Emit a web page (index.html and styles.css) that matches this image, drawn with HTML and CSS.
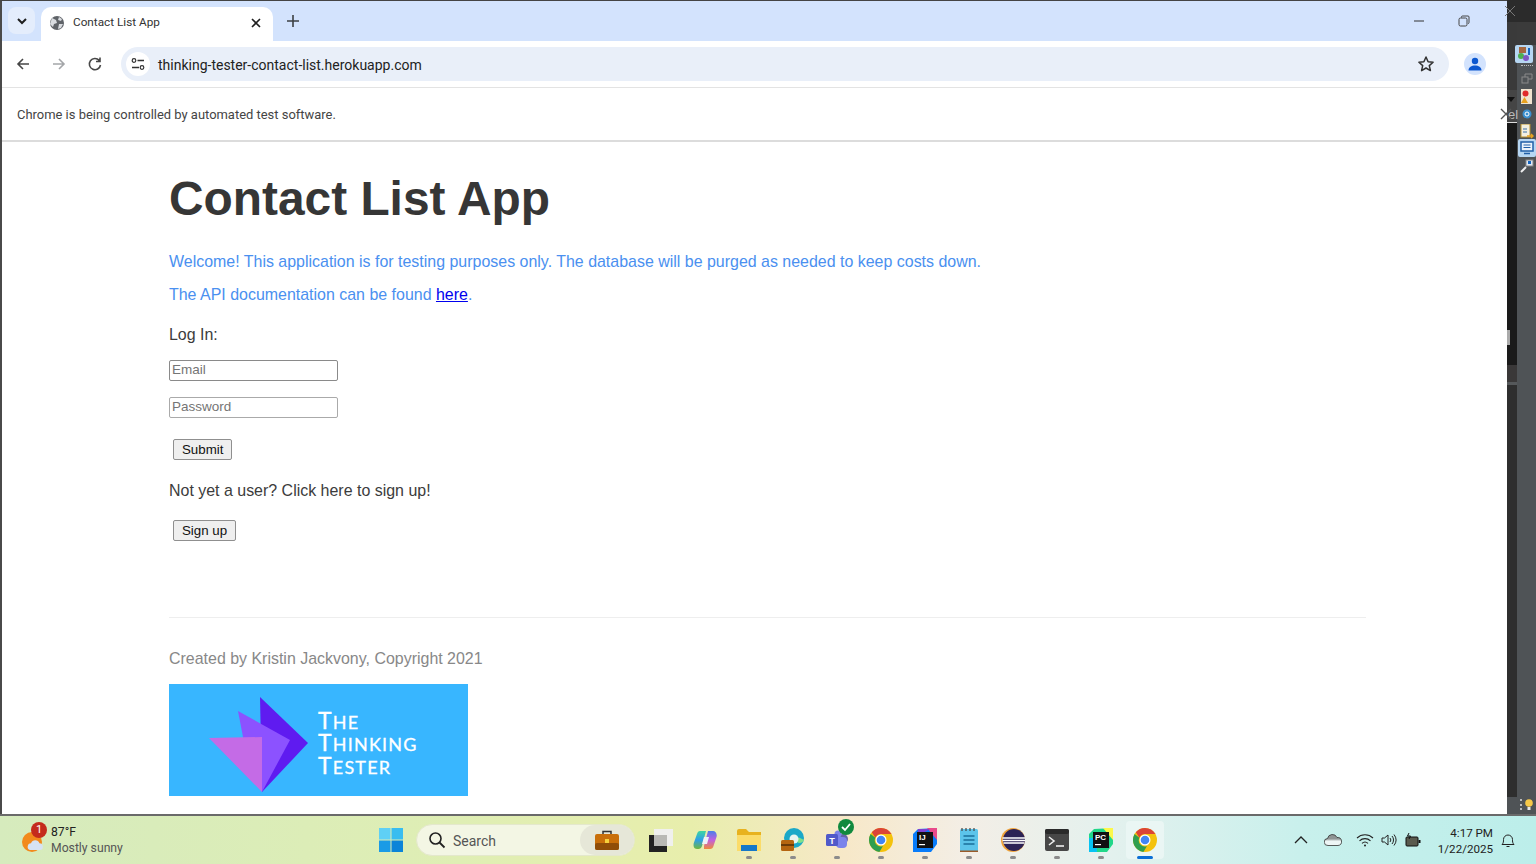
FILE: index.html
```html
<!DOCTYPE html>
<html lang="en">
  <head>
    <title>Contact List App</title>
    <link rel="stylesheet" href="styles.css">
  </head>
  <body>
    <div class="desktop">
      <div class="browser">
        <div class="tabstrip">
          <div class="tabsearch">
            <svg width="12" height="12" viewBox="0 0 12 12"><path d="M2 4l4 4 4-4" fill="none" stroke="#1f1f1f" stroke-width="2"/></svg>
          </div>
          <div class="tab">
            <svg class="favicon" width="16" height="16" viewBox="0 0 16 16"><circle cx="8" cy="8" r="7" fill="#5f6368"/><path d="M3 3l4 2 1 3-3 1-1 3-3-3zM10 2l3 2-1 2-3-1zM10 9l4 0-2 4-3 1z" fill="#d9dce0"/></svg>
            <span class="tabtitle">Contact List App</span>
            <svg width="12" height="12" viewBox="0 0 12 12"><path d="M2 2l8 8M10 2l-8 8" stroke="#1f1f1f" stroke-width="1.6"/></svg>
          </div>
          <svg class="newtab" width="14" height="14" viewBox="0 0 14 14"><path d="M7 1v12M1 7h12" stroke="#3c4043" stroke-width="1.6"/></svg>
          <div class="wincontrols">
            <svg width="12" height="12" viewBox="0 0 12 12"><path d="M1 6h10" stroke="#333" stroke-width="1"/></svg>
            <svg width="12" height="12" viewBox="0 0 12 12"><rect x="1" y="3" width="8" height="8" rx="1.5" fill="none" stroke="#444"/><path d="M3.500 2.500V2a1 1 0 0 1 1-1h5.500a1 1 0 0 1 1 1v5.500a1 1 0 0 1-1 1" fill="none" stroke="#444"/></svg>
          </div>
        </div>
        <div class="toolbar">
          <svg class="navicon" width="16" height="16" viewBox="0 0 16 16"><path d="M14 8H3M8 3L3 8l5 5" fill="none" stroke="#474747" stroke-width="1.600"/></svg>
          <svg class="navicon" width="16" height="16" viewBox="0 0 16 16"><path d="M2 8h11M8 3l5 5-5 5" fill="none" stroke="#a4a6a9" stroke-width="1.600"/></svg>
          <svg class="navicon" width="16" height="16" viewBox="0 0 16 16"><path d="M13.500 9a5.600 5.600 0 1 1-1.300-4.600M13 1.500V5.500H9" fill="none" stroke="#474747" stroke-width="1.600"/></svg>
          <div class="omnibox">
            <div class="siteinfo">
              <svg width="14" height="14" viewBox="0 0 14 14"><circle cx="3" cy="3.500" r="1.800" fill="none" stroke="#333" stroke-width="1.200"/><path d="M6.500 3.500H13M1 10.500h7" stroke="#333" stroke-width="1.400"/><circle cx="11" cy="10.500" r="1.800" fill="none" stroke="#333" stroke-width="1.200"/></svg>
            </div>
            <span class="url">thinking-tester-contact-list.herokuapp.com</span>
            <svg class="star" width="18" height="18" viewBox="0 0 18 18"><path d="M9 2l2.100 4.700 5 .5-3.800 3.400 1.100 5L9 13l-4.400 2.600 1.100-5L1.900 7.200l5-.5z" fill="none" stroke="#333" stroke-width="1.500" stroke-linejoin="round"/></svg>
          </div>
          <div class="profile">
            <svg width="14" height="14" viewBox="0 0 14 14"><circle cx="7" cy="4" r="3.200" fill="#0b57d0"/><path d="M0.500 13.500c0-3.500 3-5 6.500-5s6.500 1.500 6.500 5z" fill="#0b57d0"/></svg>
          </div>
        </div>
        <div class="infobar">Chrome is being controlled by automated test software.</div>
        <main class="page">
          <h1>Contact List App</h1>
          <p class="notice">Welcome! This application is for testing purposes only. The database will be purged as needed to keep costs down.</p>
          <p class="notice">The API documentation can be found <a href="#">here</a>.</p>
          <p class="label">Log In:</p>
          <form>
            <input class="field" type="text" placeholder="Email">
            <input class="field" type="password" placeholder="Password">
            <button class="btn" type="button">Submit</button>
          </form>
          <p class="label signup">Not yet a user? Click here to sign up!</p>
          <button class="btn" type="button">Sign up</button>
          <footer class="footer">
            <p>Created by Kristin Jackvony, Copyright 2021</p>
            <svg class="banner" width="299" height="112" viewBox="0 0 299 112">
              <rect width="299" height="112" fill="#38b6ff"/>
              <polygon points="91,13 139,59 93,108" fill="#5f1bf0"/>
              <polygon points="69,27 121,56 93,108 74,53" fill="#8c52ff"/>
              <polygon points="40,54 93,53 93,108" fill="#c46be6"/>
              <text class="bannertext">
                <tspan x="149" y="45"><tspan class="bigcap">T</tspan>HE</tspan>
                <tspan x="149" y="67"><tspan class="bigcap">T</tspan>HINKING</tspan>
                <tspan x="149" y="90"><tspan class="bigcap">T</tspan>ESTER</tspan>
              </text>
            </svg>
          </footer>
        </main>
      </div>
      <div class="idestrip">
        <div class="idegutter">
          <span class="gutterarrow"></span>
          <span class="gutterel">el</span>
          <span class="gutterthumb"></span>
        </div>
        <div class="idetools">
          <div class="tool active first">
            <svg width="16" height="16" viewBox="0 0 16 16"><rect x="3" y="1" width="7" height="6" fill="#a5673f"/><circle cx="5" cy="10" r="3" fill="#4caf50"/><circle cx="10" cy="12" r="3" fill="#7e57c2"/><path d="M13 2v7" stroke="#1565c0" stroke-width="2"/></svg>
          </div>
          <div class="tooldots"></div>
          <div class="tool">
            <svg width="12" height="12" viewBox="0 0 12 12"><rect x="1" y="5" width="6" height="6" fill="none" stroke="#8a8a8a"/><path d="M4 5V2h7v5H7" fill="none" stroke="#8a8a8a"/></svg>
          </div>
          <div class="tool">
            <svg width="13" height="15" viewBox="0 0 13 15"><rect x="1" y="0" width="11" height="15" fill="#f0e4d0"/><circle cx="5.500" cy="4.500" r="3" fill="#e02b2b"/><path d="M1 14l3.500-6 3.500 6z" fill="#e9a21f"/></svg>
          </div>
          <div class="tool">
            <svg width="10" height="10" viewBox="0 0 10 10"><circle cx="5" cy="5" r="4.500" fill="#3a8fd0"/><circle cx="5" cy="5" r="2" fill="none" stroke="#fff"/></svg>
          </div>
          <div class="tool doc">
            <svg width="14" height="15" viewBox="0 0 14 15"><rect x="1" y="0" width="9" height="13" fill="#f4f0e0" stroke="#b8912e"/><path d="M3 5h4M3 8h4" stroke="#3a6ea5"/><path d="M7 12h6M11 10l2 2-2 2" fill="none" stroke="#e9a21f" stroke-width="1.500"/></svg>
          </div>
          <div class="tool active monitor">
            <svg width="14" height="14" viewBox="0 0 14 14"><rect x="1" y="1" width="12" height="9" fill="#eaf3fb" stroke="#1f5fa8" stroke-width="1.500"/><path d="M3.500 4h7M3.500 6.500h7" stroke="#1f5fa8"/><path d="M4 12.500h6" stroke="#1f5fa8" stroke-width="1.500"/></svg>
          </div>
          <div class="tool">
            <svg width="14" height="14" viewBox="0 0 14 14"><rect x="6" y="1" width="7" height="6" fill="#dfe8f2" stroke="#888"/><rect x="8" y="2" width="3" height="3" fill="#1565c0"/><path d="M1 13l5-5" stroke="#eee" stroke-width="2"/></svg>
          </div>
          <div class="toolspacer"></div>
          <div class="toolbulb">
            <span class="griplines"></span>
            <svg width="8" height="11" viewBox="0 0 8 11"><circle cx="4" cy="4" r="3.800" fill="#f7c948"/><rect x="2.500" y="8" width="3" height="3" fill="#e8e8e8"/></svg>
          </div>
        </div>
      </div>
      <svg class="closex" width="12" height="12" viewBox="0 0 12 12"><path d="M1 1l10 10M11 1L1 11" stroke="#777" stroke-width="1"/></svg>
      <svg class="infoclose" width="12" height="12" viewBox="0 0 12 12"><path d="M1 1l10 10M11 1L1 11" stroke="#555" stroke-width="1.400"/></svg>
    </div>
    <footer class="taskbar">
      <div class="weather">
        <svg class="weathericon" width="26" height="26" viewBox="0 0 26 26">
          <circle cx="11" cy="15" r="10" fill="#f28a1c"/>
          <path d="M9 23a3.500 3.500 0 0 1 1-6.800 4.500 4.500 0 0 1 8.500 0 3.500 3.500 0 0 1 1 6.800z" fill="#d6e3f3"/>
        </svg>
        <span class="weatherbadge">1</span>
        <div class="weathertext">
          <div class="temp">87°F</div>
          <div class="cond">Mostly sunny</div>
        </div>
      </div>
      <svg class="start" width="24" height="24" viewBox="0 0 24 24">
        <rect width="11.500" height="11.500" fill="#5fd0f5"/><rect x="12.500" width="11.500" height="11.500" fill="#38bdf0"/>
        <rect y="12.500" width="11.500" height="11.500" fill="#1a9be6"/><rect x="12.500" y="12.500" width="11.500" height="11.500" fill="#0b84d8"/>
      </svg>
      <div class="search">
        <svg width="18" height="18" viewBox="0 0 18 18"><circle cx="7.500" cy="7.500" r="5.500" fill="none" stroke="#222" stroke-width="1.600"/><path d="M11.500 11.500l5 5" stroke="#222" stroke-width="1.800"/></svg>
        <span class="searchword">Search</span>
        <div class="searchpic">
          <svg width="24" height="20" viewBox="0 0 24 20"><path d="M8 4V1.500h8V4" fill="none" stroke="#333" stroke-width="1.500"/><rect y="4" width="24" height="16" rx="2" fill="#c96f0a"/><rect y="13" width="24" height="7" rx="2" fill="#8f4d08"/><rect x="10" y="9" width="4" height="4" fill="#f6d13c"/></svg>
        </div>
      </div>
      <div class="apps">
        <div class="app">
          <svg width="24" height="24" viewBox="0 0 24 24"><rect x="5" y="1" width="19" height="17" fill="#f0f0ee"/><rect x="0" y="7" width="18" height="17" fill="#222"/><rect x="5" y="7" width="13" height="11" fill="#b9b9b5"/></svg>
        </div>
        <div class="app">
          <svg width="24" height="18" viewBox="0 0 24 18">
            <defs>
              <linearGradient id="copleft" x1="0" y1="0" x2="0" y2="1"><stop offset="0" stop-color="#3dd6a0"/><stop offset=".5" stop-color="#2f9ee8"/><stop offset="1" stop-color="#6fb83c"/></linearGradient>
              <linearGradient id="copright" x1="0" y1="0" x2="0" y2="1"><stop offset="0" stop-color="#4a7fe8"/><stop offset=".5" stop-color="#c060e0"/><stop offset="1" stop-color="#f08a3c"/></linearGradient>
            </defs>
            <path d="M7 0h6l-4 15c-.5 2-2 3-3.500 3H4C1 18 0 15 .8 12L4 3C4.600 1 5.500 0 7 0z" fill="url(#copleft)"/>
            <path d="M11 18h6c2 0 3-1 3.500-3L23.500 6c1-3-1-6-3.500-6H15L11 15z" fill="url(#copright)"/>
            <path d="M11 6h5l-2 7H9z" fill="#eef2f8"/>
          </svg>
        </div>
        <div class="app running">
          <svg width="26" height="24" viewBox="0 0 26 24"><path d="M1 3a2 2 0 0 1 2-2h7l3 3h12v19H1z" fill="#e8b21e"/><rect x="1" y="7" width="24" height="16" fill="#fbdc6a"/><rect x="5" y="17" width="16" height="6" fill="#1578c8"/></svg>
        </div>
        <div class="app running">
          <svg width="24" height="24" viewBox="0 0 24 24"><circle cx="13" cy="10" r="10" fill="#1ba8c8"/><path d="M23 12c-1 3-5 4-7 2-2-3 1-5 3-4" fill="#7fe08a"/><circle cx="13" cy="11" r="4.500" fill="#e8f4f0"/><rect x="0" y="12" width="13" height="11" rx="1.500" fill="#b5650f"/><rect x="0" y="16" width="13" height="2" fill="#6b3b08"/></svg>
        </div>
        <div class="app running">
          <svg width="24" height="24" viewBox="0 0 24 24"><circle cx="18" cy="11" r="5" fill="#6264a7"/><circle cx="13" cy="6" r="3.500" fill="#7b83eb"/><rect x="11" y="9" width="11" height="11" rx="4" fill="#7b83eb"/><rect x="1" y="6" width="12" height="12" rx="1.500" fill="#5059c9"/><text class="teamst" x="7" y="15.500">T</text></svg>
          <svg class="teamscheck" width="16" height="16" viewBox="0 0 16 16"><circle cx="8" cy="8" r="8" fill="#10893e"/><path d="M4 8l3 3 5-6" fill="none" stroke="#fff" stroke-width="1.800"/></svg>
        </div>
        <div class="app running">
          <svg class="chromeicon" width="24" height="24" viewBox="0 0 24 24"><use href="#chrome"/></svg>
        </div>
        <div class="app running">
          <svg width="24" height="24" viewBox="0 0 24 24"><path d="M5 1L24 0v16l-6 8H0V6z" fill="#087cfa"/><path d="M14 0h10v12z" fill="#e84a8b"/><path d="M5 1h12L5 8z" fill="#7f3fd0"/><rect x="4" y="4" width="16" height="16" fill="#111"/><text class="ideabbr" x="6" y="12">IJ</text><rect x="6" y="16" width="6" height="1.200" fill="#fff"/></svg>
        </div>
        <div class="app running">
          <svg width="20" height="26" viewBox="0 0 20 26"><rect x="1" y="2" width="18" height="23" rx="1.500" fill="#5cc4ea"/><path d="M1 23.500h18V25H1z" fill="#9a5a28"/><path d="M3 1v3M7 1v3M11 1v3M15 1v3" stroke="#444" stroke-width="1.200"/><path d="M4.500 9h11M4.500 13h11M4.500 17h11" stroke="#1a6f9a" stroke-width="1.400"/></svg>
        </div>
        <div class="app running">
          <svg width="24" height="24" viewBox="0 0 24 24"><circle cx="12" cy="12" r="12" fill="#f0a33a"/><circle cx="13" cy="12" r="11" fill="#2c2255"/><path d="M1.500 10h23M1.500 12.500h23M2.500 15h21" stroke="#fff" stroke-width="1.300"/></svg>
        </div>
        <div class="app running">
          <svg width="24" height="22" viewBox="0 0 24 22"><rect width="24" height="22" rx="2" fill="#474747"/><rect width="24" height="5" rx="2" fill="#2a2a2a"/><path d="M4 8l5 4-5 4" fill="none" stroke="#eee" stroke-width="1.600"/><path d="M11 17h8" stroke="#eee" stroke-width="1.600"/></svg>
        </div>
        <div class="app running">
          <svg width="24" height="24" viewBox="0 0 24 24"><path d="M5 1L24 0v16l-6 8H0V6z" fill="#21d789"/><path d="M14 0h10v12z" fill="#fcf84a"/><path d="M0 10h8v14H0z" fill="#07c3f2"/><rect x="4" y="4" width="16" height="16" fill="#111"/><text class="ideabbr" x="6" y="12">PC</text><rect x="6" y="16" width="6" height="1.200" fill="#fff"/></svg>
        </div>
        <div class="app current">
          <svg class="chromeicon" width="24" height="24" viewBox="0 0 24 24"><use href="#chrome"/></svg>
        </div>
      </div>
      <div class="tray">
        <svg width="14" height="8" viewBox="0 0 14 8"><path d="M1 7l6-6 6 6" fill="none" stroke="#222" stroke-width="1.300"/></svg>
        <svg class="cloud" width="18" height="12" viewBox="0 0 18 12">
          <defs><linearGradient id="cloudfill" x1="0" y1="0" x2="0" y2="1"><stop offset=".4" stop-color="#8f9494"/><stop offset=".6" stop-color="#eef6f6"/></linearGradient></defs>
          <path d="M4 11.500a3.500 3.500 0 0 1-.5-7 5 5 0 0 1 9.500-1 4 4 0 0 1 1 8z" fill="url(#cloudfill)" stroke="#333" stroke-width=".8"/>
        </svg>
        <svg class="wifi" width="18" height="14" viewBox="0 0 18 14"><path d="M1 5a11.500 11.500 0 0 1 16 0M3.500 7.800a8 8 0 0 1 11 0M6 10.300a4.500 4.500 0 0 1 6 0" fill="none" stroke="#222" stroke-width="1.100"/><circle cx="9" cy="12.500" r="1" fill="#222"/></svg>
        <svg class="speaker" width="16" height="14" viewBox="0 0 16 14"><path d="M1 5v4h2.500L7 12V2L3.500 5z" fill="none" stroke="#222" stroke-width="1"/><path d="M9 5a3 3 0 0 1 0 4M11 3a6 6 0 0 1 0 8M13 1.500a9 9 0 0 1 0 11" fill="none" stroke="#222"/></svg>
        <svg class="battery" width="16" height="14" viewBox="0 0 16 14"><rect x="1" y="4" width="12" height="9" rx="1" fill="#5a5a4e" stroke="#111"/><rect x="13.500" y="7" width="2" height="3" fill="#111"/><path d="M4 0L2.500 3h3L4 6" fill="none" stroke="#111"/></svg>
        <div class="clock">
          <div>4:17 PM</div>
          <div>1/22/2025</div>
        </div>
        <svg class="bell" width="14" height="15" viewBox="0 0 14 15"><path d="M1 11.500c1.500-1.500 1.500-3 1.500-5a4.500 4.500 0 0 1 9 0c0 2 0 3.500 1.500 5z" fill="none" stroke="#222"/><path d="M5.500 13.500h3" stroke="#222"/></svg>
      </div>
    </footer>
    <svg class="defs" width="0" height="0">
      <defs>
        <g id="chrome">
          <circle cx="12" cy="12" r="12" fill="#f4c20d"/>
          <path d="M12 0a12 12 0 0 1 10.400 6H12a6 6 0 0 0-5.600 3.800L2.800 4.200A12 12 0 0 1 12 0z" fill="#db4437"/>
          <path d="M1.600 6a12 12 0 0 0 8.800 17.900L14 18a6 6 0 0 1-7.600-8.200z" fill="#2f9e4f"/>
          <circle cx="12" cy="12" r="5.500" fill="#fff"/>
          <circle cx="12" cy="12" r="4.300" fill="#4285f4"/>
        </g>
      </defs>
    </svg>
  </body>
</html>
```
FILE: styles.css
```css
* {box-sizing:border-box}
html,body {margin:0;padding:0;height:864px;overflow:hidden}
body {display:flex;flex-direction:column;font-family:"Liberation Sans",Arial,sans-serif;background:#fff}
.desktop {position:relative;display:flex;height:814px}
.browser {width:1507px;display:flex;flex-direction:column;border-left:2px solid #4a4a4a;border-top:1px solid #444}
.tabstrip {height:40px;background:#d3e3fd;display:flex;align-items:flex-end;font-family:Roboto,sans-serif}
.tabsearch {width:27px;height:27px;margin:0 6px 7px 6px;background:#e4edfc;border-radius:8px;display:flex;align-items:center;justify-content:center}
.tab {width:232px;height:34px;background:#fff;border-radius:10px 10px 0 0;display:flex;align-items:center;padding:0 11px 2px 8px}
.favicon {flex:none}
.tabtitle {flex:1;font-size:11.750px;color:#333;margin:0 0 2px 8px}
.newtab {margin:0 0 13px 13px}
.wincontrols {margin-left:auto;display:flex;gap:33px;padding-right:37px;margin-bottom:14px}
.toolbar {height:47px;background:#fff;display:flex;align-items:center;padding-left:13px;border-bottom:1px solid #e3e3e3}
.navicon {margin-right:20px;flex:none}
.navicon:nth-child(3) {margin-right:18px}
.omnibox {width:1328px;height:34px;background:#e9eff9;border-radius:17px;display:flex;align-items:center;padding:0 14px 0 5px}
.siteinfo {width:24px;height:24px;border-radius:12px;background:#fff;display:flex;align-items:center;justify-content:center}
.url {flex:1;font:14px/18px Roboto,sans-serif;color:#222;margin-left:8px;padding-top:1px}
.profile {width:22px;height:22px;border-radius:11px;background:#d3e3fd;margin-left:15px;display:flex;align-items:center;justify-content:center}
.infobar {height:54px;border-bottom:2px solid #dcdcdc;padding:19px 0 0 15px;font:12.950px/15px Roboto,sans-serif;color:#444}
.page {flex:1;padding:30px 0 0 167px;width:1364px;color:#333}
h1 {margin:0 0 26px;font-size:47.850px;line-height:53px;font-weight:700;color:#363636}
.notice {margin:0 0 11px;font-size:15.960px;line-height:22px;color:#4a90f0}
.notice a {color:#00e}
.label {margin:18px 0 0;font-size:15.960px;line-height:22px;color:#3c3c3c}
form {display:flex;flex-direction:column;align-items:flex-start;margin-top:14px}
.field {width:169px;height:21px;margin:0 0 16px;padding:0 2px 2px;border:1px solid #8a8a8a;border-radius:2px;font:13.500px "Liberation Sans",sans-serif;background:#fff}
.field + .field {border-color:#aaa}
.field::placeholder {color:#757575}
.btn {display:block;margin:5px 0 0 4px;height:21px;padding:0 8px 1px;background:#efefef;border:1px solid #8f8f8f;border-radius:2px;font:13.300px "Liberation Sans",sans-serif;color:#111}
.signup {margin-top:20px}
.signup + .btn {margin-top:18px}
.footer {margin-top:76px;border-top:1px solid #eee;width:1197px;padding-top:30px}
.footer p {margin:0 0 14px;font-size:15.960px;line-height:22px;color:#888}
.banner {display:block}
.bannertext {font:18px Lato,sans-serif;letter-spacing:1.200px;fill:#fff;stroke:#fff;stroke-width:.3px}
.bigcap {font-size:23px}
.idestrip {width:29px;display:flex;overflow:hidden}
.idegutter {position:relative;width:10px;background:linear-gradient(#2b2b2b 22px,#3a3a3a 22px,#3a3a3a 90px,#454545 90px,#454545 122px,#ddd 122px,#ddd 123px,#1a1a1a 123px,#1a1a1a 365px,#3a3838 365px,#3a3838 382px,#55585a 382px,#55585a 385px,#2e2e2e 385px,#2e2e2e 797px,#4f5356 797px)}
.gutterarrow {position:absolute;top:97px;left:0;border:4px solid transparent;border-top:5px solid #111;border-bottom:0}
.gutterel {position:absolute;top:107px;left:1px;font:13px "Liberation Sans",sans-serif;color:#bbb}
.gutterthumb {position:absolute;top:330px;left:0;width:3px;height:15px;background:#aaa}
.idetools {flex:1;display:flex;flex-direction:column;align-items:center;padding-top:45px;background:linear-gradient(#2b2b2b 22px,#3b3b3b 22px,#3b3b3b 45px,#4f5356 45px)}
.tool {width:18px;height:18px;flex:none;display:flex;align-items:center;justify-content:center}
.tool.doc {height:16px}
.tool.active {background:#b6d6f2;border-radius:2px}
.tool.first {position:relative;left:-3px}
.tooldots {width:12px;height:2px;margin:2px 0;border-top:1px dotted #bbb}
.toolspacer {flex:1}
.toolbulb {display:flex;align-items:center;gap:3px;height:14px;margin-bottom:3px}
.griplines {width:2px;height:11px;border-left:2px dotted #bbb}
.closex {position:absolute;left:1504px;top:5px}
.infoclose {position:absolute;left:1500px;top:108px}
.taskbar {height:50px;border-top:2px solid #6a6a6a;background:linear-gradient(90deg,#d6ebbd 0,#dfeeb4 30%,#e8eeac 45%,#f7e8c8 55%,#f3eee6 63%,#e4f1ee 72%,#c8f0ec 85%,#bceeea 100%);display:flex;align-items:center;position:relative;font-family:Roboto,sans-serif}
.weather {position:relative;display:flex;align-items:center;width:379px;padding-left:21px}
.weathericon {flex:none}
.weatherbadge {position:absolute;left:31px;top:-2px;width:16px;height:16px;border-radius:8px;background:#c42b1c;color:#fff;font:11px/16px Roboto,sans-serif;text-align:center}
.weathertext {margin-left:4px;font-size:12.200px;line-height:16px}
.temp {color:#222}
.cond {color:#555}
.start {flex:none}
.search {width:219px;height:32px;margin-left:13px;border-radius:16px;background:#f3f6e4;border:1px solid #e4e8cc;display:flex;align-items:center;padding-left:11px}
.searchword {flex:1;font-size:14px;line-height:18px;padding-top:1px;color:#555;margin-left:7px}
.searchpic {width:54px;height:30px;border-radius:15px;background:#e6e7d8;display:flex;align-items:center;justify-content:center}
.apps {display:flex;margin-left:4px;height:48px}
.app {position:relative;width:44px;height:48px;display:flex;align-items:center;justify-content:center}
.app.running::after {content:"";position:absolute;bottom:5px;left:19px;width:6px;height:3px;border-radius:2px;background:#8b8b8b}
.app.current {background:#eaf6f4;border-radius:4px;height:38px;margin-top:5px;width:38px;margin-left:3px}
.app.current::after {content:"";position:absolute;bottom:0;left:11px;width:16px;height:3px;border-radius:2px;background:#0b6fd6}
.teamscheck {position:absolute;left:23px;top:3px}
.teamst {font:700 9px "Liberation Sans",sans-serif;fill:#fff;text-anchor:middle}
.ideabbr {font:700 8px "Liberation Sans",sans-serif;fill:#fff}
.tray {position:absolute;right:21px;top:0;height:48px;display:flex;align-items:center}
.cloud {margin-left:16px}
.wifi {margin-left:14px}
.speaker {margin-left:7px}
.battery {margin-left:8px}
.clock {width:72px;font-size:11.600px;line-height:16px;text-align:right;color:#222;padding-top:1px}
.bell {margin-left:8px}
.defs {position:absolute}
```
